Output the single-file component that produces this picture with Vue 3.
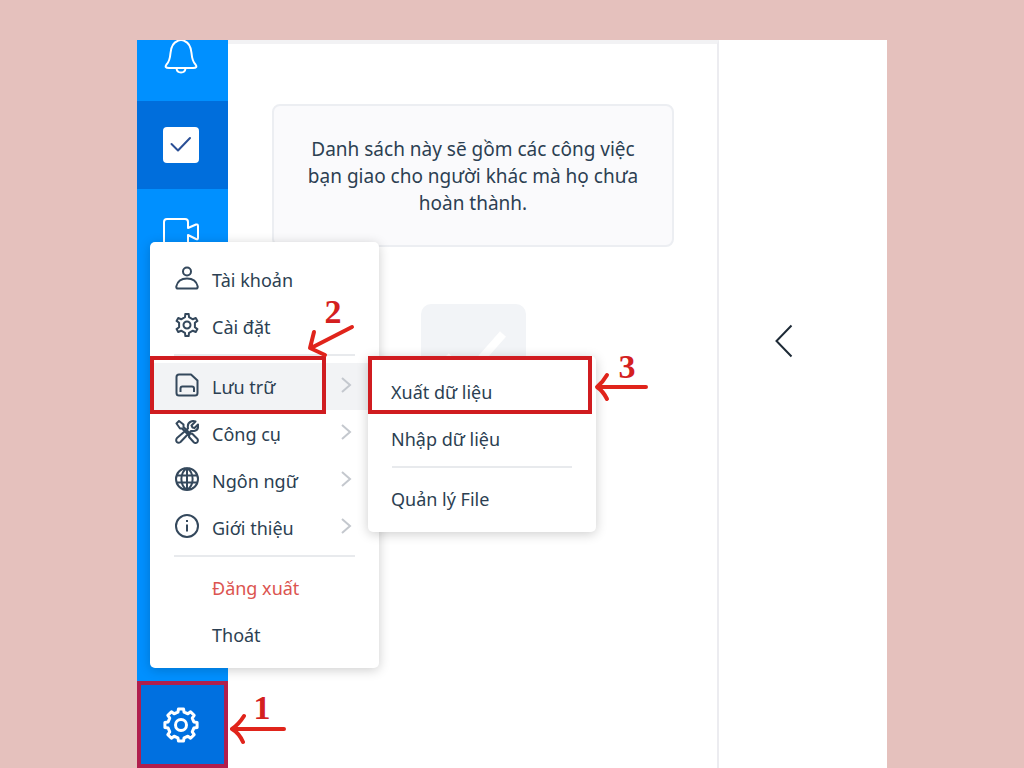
<script setup>
const gear = (n, ro, ri, c, tip, base) => {
  const pts = []
  const step = (Math.PI * 2) / n
  for (let i = 0; i < n; i++) {
    const a = i * step - Math.PI / 2
    for (const [d, r] of [[-base, ri], [-tip, ro], [tip, ro], [base, ri]]) {
      pts.push(`${(c + r * Math.cos(a + d * step)).toFixed(2)} ${(c + r * Math.sin(a + d * step)).toFixed(2)}`)
    }
  }
  return `M${pts.join('L')}Z`
}

const groups = [
  [
    { id: 'account', label: 'Tài khoản' },
    { id: 'settings', label: 'Cài đặt' },
  ],
  [
    { id: 'storage', label: 'Lưu trữ', more: true, active: true },
    { id: 'tools', label: 'Công cụ', more: true },
    { id: 'language', label: 'Ngôn ngữ', more: true },
    { id: 'about', label: 'Giới thiệu', more: true },
  ],
  [
    { id: 'logout', label: 'Đăng xuất', danger: true },
    { id: 'exit', label: 'Thoát' },
  ],
]

const icons = {
  account: 'M12 1.5a4 4 0 1 1 0 8a4 4 0 0 1 0-8ZM3 22.500H21Q23 22.500 22.700 20.500C21.500 15 17.500 12.500 12 12.500S2.500 15 1.300 20.500Q1 22.500 3 22.500Z',
  settings: gear(6, 11.2, 8.2, 12, 0.14, 0.24) + 'M12 8.500a3.500 3.500 0 1 1 0 7a3.500 3.500 0 0 1 0-7Z',
  storage: 'M4 1.500H16L22.500 7.500V20Q22.500 22.500 20 22.500H4Q1.500 22.500 1.500 20V4Q1.500 1.500 4 1.500ZM5.500 19V15.500Q5.500 13.500 7.500 13.500H17Q19 13.500 19 15.500V19',
  tools: 'M1.500 3.500L4 1L8.500 4.500V7L13 11.500L11.500 13L7 8.500H5ZM14.500 14L17 13.500L22.500 19Q23.500 21 22 22.500Q20.500 23.500 19 22.500L14 17ZM20.500 1.500L16.500 5.500L17.500 7.500L19.500 8L23 4.500Q24 10 19 11H16L5.500 22Q3.500 23.500 1.800 22Q.5 20 2 18L13 8.500Q12 3 16 1.500Q18 .5 20.500 1.500Z',
  language: 'M12 1a11 11 0 1 1 0 22a11 11 0 0 1 0-22ZM12 1C4.500 6 4.500 18 12 23C19.500 18 19.500 6 12 1ZM1.500 8.500H22.500M1.500 15.500H22.500M12 1V23',
  about: 'M12 1a11 11 0 1 1 0 22a11 11 0 0 1 0-22ZM12 10.500V17.500M12 6V8',
}
</script>

<template>
  <div class="page">
    <main class="frame">
      <nav class="rail" aria-label="Điều hướng">
        <button class="rail-item bell" aria-label="Thông báo">
          <svg width="36" height="36" viewBox="0 0 36 36"><path d="M14.500 2Q18 0 21.500 2C27 4 28 9 28.500 14C29 20 30 23 32.500 25.500Q35 29 30 29H6Q1 29 3.500 25.500C6 23 7 20 7.500 14C8 9 9 4 14.500 2ZM13.500 29.500Q14 33.500 18 33.500T22.500 29.500" /></svg>
        </button>
        <button class="rail-item tasks" aria-label="Công việc">
          <svg width="36" height="36" viewBox="0 0 36 36"><rect width="36" height="36" rx="4" fill="#fff" stroke="none" /><path class="tick" d="M8.500 17L15 23.500L27 11" /></svg>
        </button>
        <button class="rail-item video" aria-label="Cuộc gọi video">
          <svg width="38" height="32" viewBox="0 0 38 32"><path d="M5 2H23Q26 2 26 5V11L34 7.500Q36 7 36 9V21Q36 23 34 22L26 18V26Q26 29 23 29H5Q2 29 2 26V5Q2 2 5 2Z" /></svg>
        </button>
        <button class="rail-item gear" aria-label="Cài đặt">
          <svg width="36" height="36" viewBox="0 0 36 36"><path :d="gear(8, 16.3, 13.2, 18, 0.2, 0.3)" /><circle cx="18" cy="18" r="5.500" /></svg>
        </button>
      </nav>

      <section class="list">
        <p class="notice">Danh sách này sẽ gồm các công việc bạn giao cho người khác mà họ chưa hoàn thành.</p>
        <svg class="placeholder" width="105" height="105" viewBox="0 0 105 105"><rect width="105" height="105" rx="10" fill="#f2f4f7" /><path d="M25 52L45 72L82 30" fill="none" stroke="#fff" stroke-width="8" /></svg>
      </section>

      <section class="detail">
        <button class="back" aria-label="Quay lại">
          <svg width="20" height="34" viewBox="0 0 20 34"><path d="M17.500 1.500L2.500 17L17.500 32.500" /></svg>
        </button>
      </section>

      <div class="menu">
        <div v-for="(group, g) in groups" :key="g" class="group">
          <button v-for="item in group" :key="item.id" class="row" :class="{ active: item.active, danger: item.danger }">
            <span class="icon"><svg v-if="icons[item.id]" width="24" height="24" viewBox="0 0 24 24"><path :d="icons[item.id]" /></svg></span>
            <span class="label">{{ item.label }}</span>
            <svg v-if="item.more" class="chevron" width="12" height="18" viewBox="0 0 12 18"><path d="M2 2L10 9L2 16" /></svg>
          </button>
        </div>
      </div>

      <div class="menu submenu">
        <div class="group">
          <button class="row">Xuất dữ liệu</button>
          <button class="row">Nhập dữ liệu</button>
        </div>
        <div class="group">
          <button class="row">Quản lý File</button>
        </div>
      </div>

      <div class="mark mark-storage"></div>
      <div class="mark mark-export"></div>

      <div class="step step-one">
        <b>1</b>
        <svg width="58" height="32" viewBox="0 0 58 32"><path d="M55 16H4M15 3Q10 11 3 16Q10 20 14 29" /></svg>
      </div>
      <div class="step step-two">
        <b>2</b>
        <svg width="50" height="36" viewBox="0 0 50 36"><path d="M46 4L5 25M8 9L4 25L19 32" /></svg>
      </div>
      <div class="step step-three">
        <b>3</b>
        <svg width="56" height="30" viewBox="0 0 56 30"><path d="M52 15H4M13 3Q9 10 3 15Q9 19 13 27" /></svg>
      </div>
    </main>
  </div>
</template>

<style>
body {
  margin: 0;
  background: #e5c1bd;
}
</style>

<style scoped>
.page {
  box-sizing: border-box;
  display: grid;
  grid-template-columns: 137fr 750fr 137fr;
  min-height: 100vh;
  padding-top: 40px;
  color: #2c3f52;
  font-family: "Noto Sans", "Open Sans", sans-serif;
  font-size: 18px;
}
button {
  margin: 0;
  padding: 0;
  border: 0;
  background: none;
  color: inherit;
  font: inherit;
  cursor: pointer;
}
svg {
  display: block;
  flex: none;
}
.frame {
  position: relative;
  grid-column: 2;
  display: grid;
  grid-template-columns: 91px 491fr 168fr;
  background: #fff;
}
.rail {
  display: flex;
  flex-direction: column;
  background: #0090ff;
}
.rail-item {
  display: flex;
  align-items: center;
  justify-content: center;
  height: 88px;
  padding-right: 3px;
}
.rail-item svg {
  fill: none;
  stroke: #fff;
  stroke-width: 2;
  stroke-linejoin: round;
  stroke-linecap: round;
}
.rail-item.bell {
  align-items: flex-end;
  height: 61px;
  padding-bottom: 26px;
  overflow: hidden;
}
.rail-item.tasks {
  background: #006edc;
}
.rail-item .tick {
  stroke: #2a4f96;
}
.rail-item.gear {
  box-sizing: border-box;
  height: 87px;
  margin-top: auto;
  border: 4px solid #b01f4d;
  background: #0070e0;
}
.rail-item.gear svg {
  stroke-width: 3;
}
.list {
  display: flex;
  flex-direction: column;
  align-items: center;
  padding: 60px 43px 0 44px;
  border-top: 4px solid #f2f2f4;
  border-right: 2px solid #ececf0;
}
.notice {
  box-sizing: border-box;
  width: 100%;
  margin: 0;
  padding: 30px 24px 28px;
  border: 2px solid #eceef2;
  border-radius: 8px;
  background: #fafafc;
  font-size: 19px;
  line-height: 27px;
  text-align: center;
}
.placeholder {
  margin-top: 57px;
}
.detail {
  padding: 284px 0 0 55px;
}
.back path {
  fill: none;
  stroke: #1d2a36;
  stroke-width: 2;
}
.menu {
  position: absolute;
  top: 202px;
  left: 13px;
  box-sizing: border-box;
  width: 229px;
  padding: 14px 0 10px;
  border-radius: 5px;
  background: #fff;
  box-shadow: 0 2px 12px rgba(0, 0, 0, 0.2);
}
.group + .group::before {
  content: "";
  display: block;
  height: 2px;
  margin: 4px 24px 7px;
  background: #e8eaed;
}
.row {
  display: flex;
  align-items: center;
  width: 100%;
  height: 47px;
  padding: 0 27px 0 25px;
  text-align: left;
}
.row.active {
  background: #f2f3f5;
}
.row.danger {
  color: #dc5450;
}
.icon {
  width: 37px;
  padding-bottom: 4px;
}
.icon svg {
  fill: none;
  stroke: #34485c;
  stroke-width: 2;
  stroke-linejoin: round;
}
.label {
  flex: 1;
}
.chevron {
  margin-bottom: 4px;
}
.chevron path {
  fill: none;
  stroke: #c4c8ce;
  stroke-width: 2;
}
.submenu {
  top: 316px;
  left: 231px;
  width: 228px;
  padding-top: 12px;
}
.submenu .row {
  padding-left: 23px;
}
.mark {
  position: absolute;
  top: 316px;
  box-sizing: border-box;
  height: 58px;
  border: 4px solid #d01c20;
}
.mark-storage {
  left: 13px;
  width: 176px;
}
.mark-export {
  left: 231px;
  width: 224px;
}
.step {
  position: absolute;
  display: grid;
  justify-items: center;
  color: #d4201f;
  font: 34px/22px "Liberation Serif", serif;
}
.step path {
  fill: none;
  stroke: #e0241b;
  stroke-width: 4;
  stroke-linecap: round;
  stroke-linejoin: round;
}
.step-one {
  top: 657px;
  left: 92px;
}
.step-one b {
  padding-left: 8px;
}
.step-two {
  top: 261px;
  left: 169px;
}
.step-two b {
  padding-left: 4px;
}
.step-three {
  top: 316px;
  left: 457px;
}
.step-three b {
  padding-left: 10px;
}
.step-one svg,
.step-three svg {
  margin-top: -6px;
}
</style>
